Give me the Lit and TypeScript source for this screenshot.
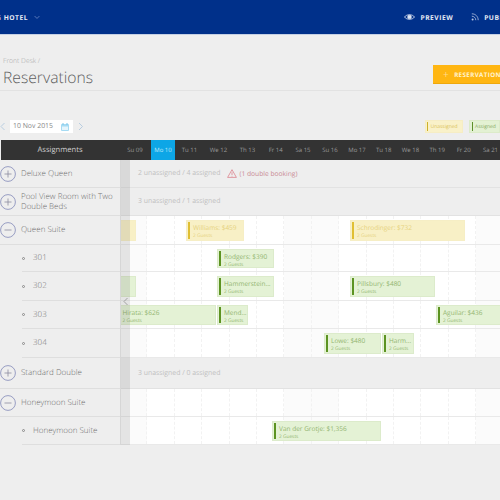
import { LitElement, html, css, svg } from 'lit';
import { customElement } from 'lit/decorators.js';

// centres of the header labels do not line up with the chart columns in the reference
const DAYS = [
  { label: 'Su 09', w: 32 },
  { label: 'Mo 10', w: 24, today: true },
  { label: 'Tu 11', w: 29 },
  { label: 'We 12', w: 29 },
  { label: 'Th 13', w: 29 },
  { label: 'Fr 14', w: 27.5 },
  { label: 'Sa 15', w: 27 },
  { label: 'Su 16', w: 27 },
  { label: 'Mo 17', w: 27 },
  { label: 'Tu 18', w: 26.5 },
  { label: 'We 18', w: 27 },
  { label: 'Th 19', w: 26.5 },
  { label: 'Fr 20', w: 26.5 },
  { label: 'Sa 21', w: 27 },
];

const WEEKEND = [0, 6, 7, 13];

type Bar = { x: number; w: number; name: string; kind: 'yellow' | 'green'; noStripe?: boolean };

type Row = {
  label: string;
  h: number;
  kind: 'group' | 'child';
  open?: boolean;
  summary?: string;
  warning?: string;
  bars?: Bar[];
};

const ROWS: Row[] = [
  { label: 'Deluxe Queen', h: 28, kind: 'group', summary: '2 unassigned / 4 assigned', warning: '(1 double booking)' },
  { label: 'Pool View Room with Two Double Beds', h: 28, kind: 'group', summary: '3 unassigned / 1 assigned' },
  {
    label: 'Queen Suite', h: 29, kind: 'group', open: true,
    bars: [
      { x: 100, w: 36, name: '', kind: 'yellow', noStripe: true },
      { x: 186, w: 58, name: 'Williams: $459', kind: 'yellow' },
      { x: 350, w: 115, name: 'Schrodinger: $732', kind: 'yellow' },
    ],
  },
  { label: '301', h: 27, kind: 'child', bars: [{ x: 217, w: 57, name: 'Rodgers: $390', kind: 'green' }] },
  {
    label: '302', h: 29, kind: 'child',
    bars: [
      { x: 100, w: 36, name: '', kind: 'green', noStripe: true },
      { x: 217, w: 57, name: 'Hammerstein...', kind: 'green' },
      { x: 350, w: 85, name: 'Pillsbury: $480', kind: 'green' },
    ],
  },
  {
    label: '303', h: 28, kind: 'child',
    bars: [
      { x: 100, w: 116, name: 'Hirata: $626', kind: 'green', noStripe: true },
      { x: 217, w: 31, name: 'Mend...', kind: 'green' },
      { x: 436, w: 90, name: 'Aguilar: $436', kind: 'green' },
    ],
  },
  {
    label: '304', h: 29, kind: 'child',
    bars: [
      { x: 324, w: 57, name: 'Lowe: $480', kind: 'green' },
      { x: 382, w: 32, name: 'Harm...', kind: 'green' },
    ],
  },
  { label: 'Standard Double', h: 31, kind: 'group', summary: '3 unassigned / 0 assigned' },
  { label: 'Honeymoon Suite', h: 28, kind: 'group', open: true },
  { label: 'Honeymoon Suite', h: 28, kind: 'child', bars: [{ x: 272, w: 109, name: 'Van der Grotje: $1,356', kind: 'green' }] },
];

const CHART_LEFT = 120;

@customElement('app-root')
export class AppRoot extends LitElement {
  static styles = css`
    :host {
      display: block;
      width: 500px;
      height: 500px;
      overflow: hidden;
      background: #eeeeee;
      font-family: 'Open Sans', sans-serif;
      color: #888;
      text-rendering: geometricPrecision;
    }

    .topbar {
      height: 34px;
      background: #00308a;
      border-bottom: 1px solid #c5d0e4;
      display: flex;
      align-items: center;
      justify-content: space-between;
      color: #e6ebf5;
      font-size: 6.7px;
      font-weight: 700;
      letter-spacing: 0.5px;
      white-space: nowrap;
    }
    .brand {
      display: flex;
      align-items: center;
      gap: 6px;
    }
    .brand-name {
      width: 28px;
      overflow: hidden;
      display: flex;
      justify-content: flex-end;
    }
    .actions {
      display: flex;
      align-items: center;
      width: 96px;
      overflow: hidden;
      flex-shrink: 0;
    }
    .action {
      display: flex;
      align-items: center;
      gap: 5.5px;
      margin-right: 17.5px;
      flex-shrink: 0;
    }

    .title-bar {
      height: 56px;
      box-sizing: border-box;
      border-bottom: 1px solid #e2e2e2;
      display: flex;
      justify-content: space-between;
      padding-left: 3px;
    }
    .crumb {
      font-size: 6.8px;
      font-weight: 300;
      color: #a8a8a8;
      margin-top: 21px;
      line-height: 10px;
    }
    h1 {
      margin: -1px 0 0;
      font-size: 15.7px;
      font-weight: 300;
      line-height: 24px;
      color: #5e5e5e;
    }
    .add {
      margin-top: 30px;
      width: 67px;
      height: 19px;
      box-sizing: border-box;
      background: #ffb612;
      border-bottom: 1px solid #eea80c;
      color: #fff3d0;
      font-size: 6.2px;
      font-weight: 700;
      letter-spacing: 0.4px;
      display: flex;
      align-items: center;
      padding-left: 10px;
      gap: 5px;
      white-space: nowrap;
      overflow: hidden;
    }
    .add span {
      flex-shrink: 0;
    }
    .add .plus {
      font-size: 10px;
      font-weight: 400;
      color: #ffdc8a;
    }

    .toolbar {
      margin-top: 29px;
      height: 13px;
      display: flex;
      align-items: center;
      padding-left: 0;
    }
    .date {
      margin: 0 5px 0 4px;
      width: 63px;
      height: 13px;
      background: #fff;
      box-sizing: border-box;
      padding: 0 4px 0 3px;
      display: flex;
      align-items: center;
      justify-content: space-between;
      font-size: 6.9px;
      color: #888;
      white-space: nowrap;
    }
    .legend {
      margin-left: auto;
      display: flex;
      gap: 6px;
      width: 75.5px;
      overflow: hidden;
    }
    .chip {
      height: 13px;
      box-sizing: border-box;
      font-size: 5px;
      display: flex;
      align-items: center;
      padding-left: 1.5px;
      gap: 2.5px;
      flex-shrink: 0;
    }
    .chip i {
      width: 1px;
      height: 9px;
      display: block;
    }
    .chip.unassigned {
      width: 38.5px;
      background: #f9f1c9;
      border: 1px solid #f6edc4;
      color: #d9c25a;
    }
    .chip.unassigned i {
      background: #cdb02a;
    }
    .chip.assigned {
      width: 31px;
      background: #e3f1d3;
      border: 1px solid #dcebc9;
      color: #86a95e;
    }
    .chip.assigned i {
      background: #5d8f2a;
    }

    .table {
      margin-top: 7px;
      position: relative;
    }
    .head {
      height: 20px;
      margin-left: 1px;
      background: #333333;
      display: flex;
      align-items: stretch;
      font-size: 6px;
      color: #9a9a9a;
      white-space: nowrap;
    }
    .head .title {
      width: 118px;
      flex-shrink: 0;
      display: flex;
      align-items: center;
      justify-content: center;
      font-size: 7.6px;
      color: #cfcfcf;
    }
    .head .day {
      flex-shrink: 0;
      display: flex;
      align-items: center;
      justify-content: center;
    }
    .head .day.today {
      background: #0da6e6;
      color: #bfe8fa;
    }

    .row {
      display: flex;
      align-items: stretch;
    }
    .label {
      width: 120px;
      flex-shrink: 0;
      box-sizing: border-box;
      display: flex;
      align-items: center;
      border-bottom: 1px solid #dedede;
      font-size: 8px;
      font-weight: 300;
      line-height: 9.5px;
      color: #707070;
    }
    .label.child {
      margin-left: 22px;
      width: 98px;
      gap: 8px;
      padding-left: 0;
    }
    .label .dot {
      width: 3px;
      height: 3px;
      box-sizing: border-box;
      border: 1px solid #888;
      border-radius: 50%;
      flex-shrink: 0;
    }
    .toggle {
      flex-shrink: 0;
      margin-right: 5px;
      display: block;
    }
    .lane {
      position: relative;
      flex: 1;
      overflow: hidden;
      box-sizing: border-box;
      border-bottom: 1px solid #e9e9e9;
      background: #fff;
      display: flex;
    }
    .lane.closed {
      background: #eeeeee;
      border-bottom-color: #e2e2e2;
      align-items: center;
      padding-left: 18px;
      font-size: 6.9px;
      color: #c0c0c0;
      white-space: nowrap;
      gap: 7px;
    }
    .warn {
      display: flex;
      align-items: center;
      gap: 2px;
      font-size: 6.7px;
      color: #c98b95;
    }
    .cell {
      width: 27.4px;
      flex-shrink: 0;
      box-sizing: border-box;
      border-right: 1px dashed #f2f2f2;
    }
    .cell.weekend {
      background: #fbfbfb;
    }
    .bar {
      position: absolute;
      top: 4px;
      bottom: 3px;
      box-sizing: border-box;
      padding: 0 0 0 6px;
      overflow: hidden;
      white-space: nowrap;
    }
    .bar::before {
      content: '';
      position: absolute;
      left: 1px;
      top: 1px;
      bottom: 1px;
      width: 1.5px;
    }
    .bar.plain::before {
      display: none;
    }
    .bar.plain {
      padding-left: 21.5px;
    }
    .bar.green {
      background: #e4f2d5;
      border: 1px solid #dcebcb;
      color: #93b570;
    }
    .bar.green::before {
      background: #5c9321;
    }
    .bar.yellow {
      background: #f8f0c6;
      border: 1px solid #f6eec5;
      color: #e6d27e;
    }
    .bar.yellow::before {
      background: #e0bf33;
    }
    .bar b {
      display: block;
      font-weight: 400;
      font-size: 6.5px;
      line-height: 10px;
      margin-top: 1.5px;
    }
    .bar small {
      display: block;
      font-size: 4.8px;
      line-height: 6px;
    }

    .strip {
      position: absolute;
      left: 120px;
      width: 10px;
      top: 20px;
      bottom: 0;
      background: rgba(90, 90, 90, 0.14);
      border-left: 1px solid #d6d6d6;
      box-sizing: border-box;
    }
    .strip svg {
      position: absolute;
      left: 2px;
      top: 137px;
      display: block;
    }
  `;

  private chevron(dir: 'left' | 'right', color: string) {
    const d = dir === 'left' ? 'M4.5 1 L1 4.5 L4.5 8' : 'M1 1 L4.5 4.5 L1 8';
    return html`<svg width="6" height="9" viewBox="0 0 6 9" fill="none" stroke=${color} stroke-width="0.8">
      <path d=${d}></path>
    </svg>`;
  }

  private toggle(open: boolean) {
    return html`<svg class="toggle" width="16" height="16" viewBox="0 0 16 16" fill="none" stroke="#8189b8" stroke-width="0.8">
      <circle cx="8" cy="8" r="7.4"></circle>
      <path d=${open ? 'M4.5 8 H11.5' : 'M4.5 8 H11.5 M8 4.5 V11.5'} stroke="#8a8a9e"></path>
    </svg>`;
  }

  private renderLane(row: Row) {
    const closed = row.kind === 'group' && !row.open;
    if (closed) {
      return html`<div class="lane closed">
        <span>${row.summary}</span>
        ${row.warning
          ? html`<span class="warn">
              <svg width="10" height="9" viewBox="0 0 10 9" fill="none" stroke="#d9747f" stroke-width="0.7">
                ${svg`<path d="M5 .7 L9.4 8.4 H.6 Z M5 3.2 V6 M5 6.8 V7.5"></path>`}
              </svg>
              ${row.warning}
            </span>`
          : ''}
      </div>`;
    }
    return html`<div class="lane">
      ${DAYS.map((_, i) => html`<div class="cell ${WEEKEND.includes(i) ? 'weekend' : ''}"></div>`)}
      ${(row.bars ?? []).map(
        (b) => html`<div
          class="bar ${b.kind} ${b.noStripe ? 'plain' : ''}"
          style="left:${b.x - CHART_LEFT}px;width:${b.w}px"
        >
          ${b.name ? html`<b>${b.name}</b><small>2 Guests</small>` : ''}
        </div>`
      )}
    </div>`;
  }

  render() {
    return html`
      <div class="topbar">
        <div class="brand">
          <div class="brand-name"><span>BOOKING HOTEL</span></div>
          <svg width="6" height="5" viewBox="0 0 7 5" fill="none" stroke="#7f9ad0" stroke-width="0.8">
            <path d="M.7 .8 L3.5 3.6 L6.3 .8"></path>
          </svg>
        </div>
        <div class="actions">
          <div class="action">
            <svg width="11" height="8" viewBox="0 0 11 8" fill="none" stroke="#dfe6f3" stroke-width="0.8">
              <path d="M.5 4 C2.5 1 8.5 1 10.5 4 C8.5 7 2.5 7 .5 4 Z"></path>
              <circle cx="5.5" cy="4" r="1.8" fill="#dfe6f3"></circle>
            </svg>
            <span>PREVIEW</span>
          </div>
          <div class="action">
            <svg width="8" height="8" viewBox="0 0 8 8" fill="none" stroke="#b9c7e3" stroke-width="0.8">
              <path d="M.8 .8 C4.5 .8 7.2 3.5 7.2 7.2 M.8 3.2 C3 3.2 4.8 5 4.8 7.2"></path>
              <circle cx="1.6" cy="6.4" r="1" fill="#b9c7e3" stroke="none"></circle>
            </svg>
            <span>PUBLISH</span>
          </div>
        </div>
      </div>

      <div class="title-bar">
        <div>
          <div class="crumb">Front Desk /</div>
          <h1>Reservations</h1>
        </div>
        <div class="add"><span class="plus">+</span><span>RESERVATION</span></div>
      </div>

      <div class="toolbar">
        ${this.chevron('left', '#a9c4dc')}
        <div class="date">
          <span>10 Nov 2015</span>
          <svg width="8" height="8" viewBox="0 0 8 8">
            <rect x="0" y="1" width="8" height="7" rx="1" fill="#a6dbf3"></rect>
            <rect x="1" y="3.5" width="6" height="3.5" fill="#e6f5fc"></rect>
            <path d="M2 0 V2 M6 0 V2" stroke="#7cc6ea" stroke-width="1"></path>
          </svg>
        </div>
        ${this.chevron('right', '#a9c4dc')}
        <div class="legend">
          <div class="chip unassigned"><i></i>Unassigned</div>
          <div class="chip assigned"><i></i>Assigned</div>
        </div>
      </div>

      <div class="table">
        <div class="head">
          <div class="title">Assignments</div>
          ${DAYS.map(
            (d) => html`<div class="day ${d.today ? 'today' : ''}" style="width:${d.w}px">${d.label}</div>`
          )}
        </div>
        ${ROWS.map(
          (r) => html`<div class="row" style="height:${r.h}px">
            ${r.kind === 'group'
              ? html`<div class="label">${this.toggle(!!r.open)}<span>${r.label}</span></div>`
              : html`<div class="label child"><span class="dot"></span><span>${r.label}</span></div>`}
            ${this.renderLane(r)}
          </div>`
        )}
        <div class="strip">${this.chevron('left', '#8f8f8f')}</div>
      </div>
    `;
  }
}
